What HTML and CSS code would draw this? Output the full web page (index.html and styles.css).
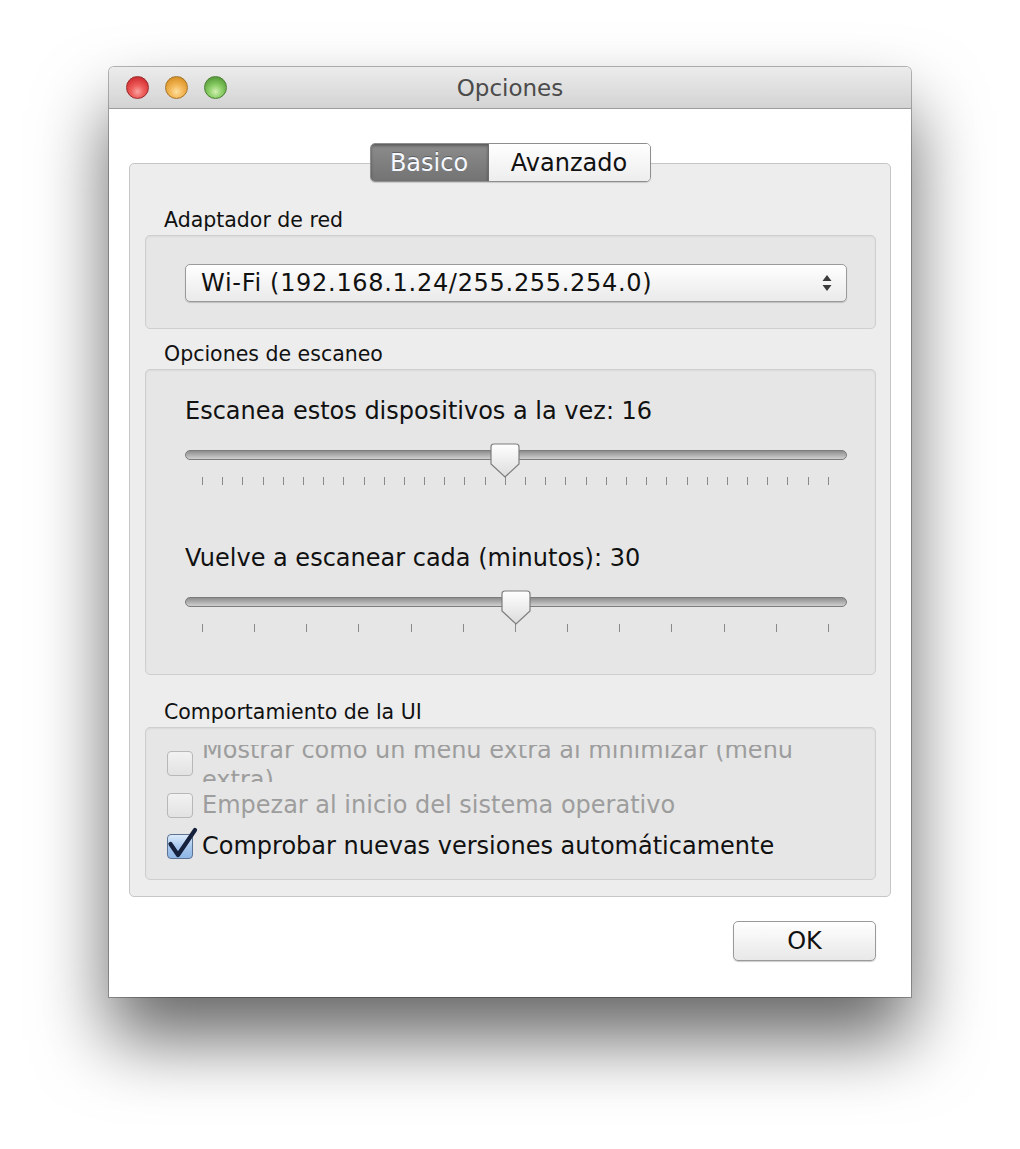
FILE: index.html
```html
<!DOCTYPE html>
<html lang="es">
<head>
<meta charset="utf-8">
<title>Opciones</title>
<link rel="stylesheet" href="styles.css">
</head>
<body>
<div class="stage">
  <div class="window">
    <div class="titlebar">
      <div class="lights">
        <span class="light red"></span>
        <span class="light yellow"></span>
        <span class="light green"></span>
      </div>
      <div class="title">Opciones</div>
    </div>
    <div class="content">
      <div class="tabs">
        <span class="tab active">Basico</span>
        <span class="tab">Avanzado</span>
      </div>
      <div class="tabbox">
        <div class="label">Adaptador de red</div>
        <div class="group group-net">
          <div class="select">
            <span class="select-text">Wi-Fi (192.168.1.24/255.255.254.0)</span>
            <svg class="arrows" width="12" height="20" viewBox="0 0 12 20"><path d="M6 2 L10.5 8 L1.5 8 Z" fill="#3c3c3c"/><path d="M1.5 12 L10.5 12 L6 18 Z" fill="#3c3c3c"/></svg>
          </div>
        </div>

        <div class="label label-scan">Opciones de escaneo</div>
        <div class="group group-scan">
          <div class="field-text">Escanea estos dispositivos a la vez: 16</div>
          <div class="slider">
            <div class="track"></div>
            <svg class="knob" style="left: 305px" width="30" height="35" viewBox="0 0 30 35"><defs><linearGradient id="kg1" x1="0" y1="0" x2="0" y2="1"><stop offset="0" stop-color="#ffffff"/><stop offset="1" stop-color="#dcdcdc"/></linearGradient></defs><path d="M4 1 H26 Q29 1 29 4 V21 L15 34 L1 21 V4 Q1 1 4 1 Z" fill="url(#kg1)" stroke="#7d7d7d" stroke-width="1.2"/></svg>
          </div>
          <div class="ticks">
            <i></i><i></i><i></i><i></i><i></i><i></i><i></i><i></i>
            <i></i><i></i><i></i><i></i><i></i><i></i><i></i><i></i>
            <i></i><i></i><i></i><i></i><i></i><i></i><i></i><i></i>
            <i></i><i></i><i></i><i></i><i></i><i></i><i></i><i></i>
          </div>
          <div class="field-text field-text-2">Vuelve a escanear cada (minutos): 30</div>
          <div class="slider">
            <div class="track"></div>
            <svg class="knob" style="left: 316px" width="30" height="35" viewBox="0 0 30 35"><defs><linearGradient id="kg2" x1="0" y1="0" x2="0" y2="1"><stop offset="0" stop-color="#ffffff"/><stop offset="1" stop-color="#dcdcdc"/></linearGradient></defs><path d="M4 1 H26 Q29 1 29 4 V21 L15 34 L1 21 V4 Q1 1 4 1 Z" fill="url(#kg2)" stroke="#7d7d7d" stroke-width="1.2"/></svg>
          </div>
          <div class="ticks">
            <i></i><i></i><i></i><i></i><i></i><i></i><i></i>
            <i></i><i></i><i></i><i></i><i></i><i></i>
          </div>
        </div>

        <div class="label label-ui">Comportamiento de la UI</div>
        <div class="group group-ui">
          <div class="check-row row-clip">
            <span class="box"></span>
            <div class="clip"><p class="clip-text disabled">Mostrar como un menu extra al minimizar (menu extra)</p></div>
          </div>
          <div class="check-row row-2">
            <span class="box"></span>
            <span class="check-text disabled">Empezar al inicio del sistema operativo</span>
          </div>
          <div class="check-row row-3">
            <span class="box checked">
              <svg class="tick" width="32" height="34" viewBox="0 0 32 34"><path d="M3.5 19 L11 30 L28 5" fill="none" stroke="#16213d" stroke-width="4.2" stroke-linecap="round" stroke-linejoin="round"/></svg>
            </span>
            <span class="check-text">Comprobar nuevas versiones automáticamente</span>
          </div>
        </div>
      </div>
      <div class="footer">
        <button class="ok">OK</button>
      </div>
    </div>
  </div>
</div>
</body>
</html>
```
FILE: styles.css
```css
html, body {
  margin: 0;
  padding: 0;
  background: #ffffff;
}
body {
  width: 1020px;
  height: 1149px;
  overflow: hidden;
  font-family: "DejaVu Sans", "Liberation Sans", sans-serif;
  color: #111;
}
.stage {
  padding: 67px 0 0 109px;
}
.window {
  width: 802px;
  height: 930px;
  box-sizing: border-box;
  background: #ffffff;
  border-radius: 5px 5px 0 0;
  box-shadow: 0 42px 72px rgba(0,0,0,0.6), 0 0 0 1px rgba(0,0,0,0.28);
  display: flex;
  flex-direction: column;
}
.titlebar {
  height: 42px;
  box-sizing: border-box;
  border-radius: 5px 5px 0 0;
  background: linear-gradient(#ececec, #d3d3d3);
  border-bottom: 1px solid #9c9c9c;
  display: flex;
  align-items: center;
  position: relative;
}
.lights {
  display: flex;
  gap: 16px;
  padding-left: 17px;
}
.light {
  width: 23px;
  height: 23px;
  border-radius: 50%;
  box-sizing: border-box;
}
.red {
  background: radial-gradient(circle at 50% 70%, #f9a3a0 0, #ee5f5b 35%, #d8373a 70%, #b02a2c 100%);
  border: 1px solid #9a2a2a;
}
.yellow {
  background: radial-gradient(circle at 50% 70%, #fde0a0 0, #f4b95a 35%, #e09a30 70%, #b97a22 100%);
  border: 1px solid #a5762a;
}
.green {
  background: radial-gradient(circle at 50% 70%, #d3f0b4 0, #8fd06a 35%, #62a843 70%, #4b8a30 100%);
  border: 1px solid #4a7f33;
}
.title {
  position: absolute;
  left: 0;
  right: 0;
  text-align: center;
  font-size: 23px;
  color: #4b4b4b;
  pointer-events: none;
}
.content {
  padding: 34px 20px 0 20px;
  display: flex;
  flex-direction: column;
}
.tabs {
  align-self: center;
  display: flex;
  position: relative;
  z-index: 1;
  height: 39px;
  box-sizing: border-box;
  border: 1px solid #8e8e8e;
  border-radius: 5px;
  overflow: hidden;
  box-shadow: 0 1px 1px rgba(0,0,0,0.15);
}
.tab {
  display: flex;
  align-items: center;
  justify-content: center;
  font-size: 24px;
  background: linear-gradient(#ffffff, #ededed);
  color: #111;
  width: 161px;
}
.tab.active {
  width: 117px;
  background: linear-gradient(#8c8c8c, #737373);
  color: #f5f8ff;
  box-shadow: inset 0 2px 3px rgba(0,0,0,0.35);
  border-right: 1px solid #6c6c6c;
  text-shadow: 0 -1px 0 rgba(0,0,0,0.3);
}
.tabbox {
  margin-top: -19px;
  height: 734px;
  box-sizing: border-box;
  border: 1px solid #c6c6c6;
  border-radius: 5px;
  background: #ededed;
  padding: 44px 14px 0 15px;
  display: flex;
  flex-direction: column;
}
.label {
  font-size: 20.5px;
  line-height: 24px;
  height: 24px;
  padding-left: 19px;
  margin-bottom: 3px;
  color: #111;
}
.label-scan {
  margin-top: 13px;
}
.label-ui {
  margin-top: 25px;
}
.group {
  box-sizing: border-box;
  border: 1px solid #cfcfcf;
  border-radius: 5px;
  background: #e6e6e6;
  box-shadow: inset 0 1px 2px rgba(0,0,0,0.06);
}
.group-net {
  height: 94px;
  padding: 28px 28px 0 39px;
}
.select {
  height: 38px;
  box-sizing: border-box;
  border: 1px solid #9a9a9a;
  border-radius: 5px;
  background: linear-gradient(#ffffff, #f3f3f3 55%, #eaeaea);
  box-shadow: 0 1px 1px rgba(0,0,0,0.18);
  display: flex;
  align-items: center;
  justify-content: space-between;
  padding: 0 13px 0 15px;
}
.select-text {
  font-size: 24px;
  letter-spacing: 0.7px;
  color: #111;
}
.arrows {
  display: block;
}
.group-scan {
  height: 306px;
  padding: 27px 28px 0 39px;
}
.field-text {
  font-size: 24px;
  line-height: 28px;
  height: 28px;
  color: #111;
}
.field-text-2 {
  margin-top: 59px;
}
.slider {
  position: relative;
  height: 36px;
  margin-top: 17px;
}
.track {
  position: absolute;
  left: 0;
  right: 0;
  top: 8px;
  height: 8px;
  border-radius: 5px;
  border: 1px solid #7c7c7c;
  background: linear-gradient(#8d8d8d, #b5b5b5 60%, #cfcfcf);
  box-sizing: content-box;
}
.knob {
  position: absolute;
  top: 1px;
  display: block;
}
.ticks {
  display: flex;
  justify-content: space-between;
  padding: 0 18px 0 17px;
  margin-top: -1px;
  height: 8px;
}
.ticks i {
  display: block;
  width: 1px;
  height: 8px;
  background: #8a8a8a;
}
.group-ui {
  height: 153px;
  padding: 17px 0 0 21px;
}
.check-row {
  display: flex;
  align-items: center;
  gap: 9px;
}
.box {
  width: 26px;
  height: 25px;
  box-sizing: border-box;
  border: 1px solid #b8b8b8;
  border-radius: 4px;
  background: linear-gradient(#f2f2f2, #e2e2e2);
  flex: none;
  position: relative;
}
.box.checked {
  border-color: #5d7393;
  background: linear-gradient(#dcebfb, #a8c8ee 50%, #8fb6e6);
}
.tick {
  position: absolute;
  left: -1px;
  top: -10px;
}
.clip {
  height: 37px;
  overflow: hidden;
}
.clip-text {
  margin: -10px 0 0 0;
  width: 620px;
  font-size: 24px;
  line-height: 30px;
}
.disabled {
  color: #9d9d9d;
}
.check-text {
  font-size: 24px;
  line-height: 30px;
}
.row-2 {
  margin-top: 8px;
}
.row-3 {
  margin-top: 11px;
}
.footer {
  display: flex;
  justify-content: flex-end;
  padding: 24px 15px 0 0;
}
.ok {
  width: 143px;
  height: 40px;
  box-sizing: border-box;
  border: 1px solid #9a9a9a;
  border-radius: 5px;
  background: linear-gradient(#ffffff, #f2f2f2 55%, #e8e8e8);
  box-shadow: 0 1px 1px rgba(0,0,0,0.2);
  font-family: "DejaVu Sans", "Liberation Sans", sans-serif;
  font-size: 24px;
  color: #111;
  padding: 0;
}
```
